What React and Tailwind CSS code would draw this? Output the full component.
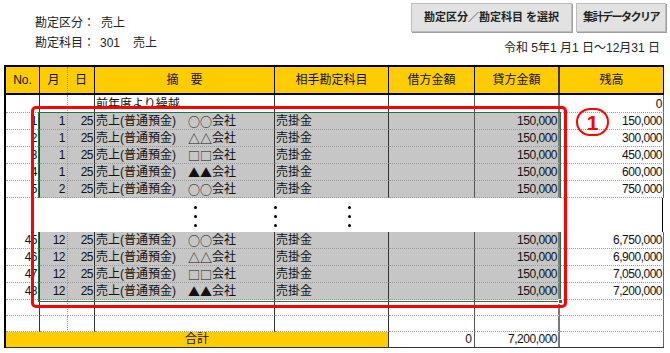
import React from 'react';

const font = "font-['Liberation_Sans','Noto_Sans_CJK_JP',sans-serif]";
const dotB = 'border-b border-b-[#9a9a9a] [border-bottom-style:dotted]';

const cols = [
  { w: 'w-[34px]', br: 'border-r border-r-[#333]', al: 'justify-end pr-[2px]' },
  { w: 'w-[28px]', br: 'border-r border-r-[#999] [border-right-style:dotted]', al: 'justify-end pr-[2px]' },
  { w: 'w-[27px]', br: 'border-r border-r-[#333]', al: 'justify-end pr-[1px]' },
  { w: 'w-[180px]', br: 'border-r border-r-[#333]', al: 'justify-start pl-[1px]' },
  { w: 'w-[114px]', br: 'border-r border-r-[#333]', al: 'justify-start pl-[1px]' },
  { w: 'w-[86px]', br: 'border-r border-r-[#555]', al: 'justify-end pr-[2px]' },
  { w: 'w-[85px]', br: 'border-r-2 border-r-[#7a7a7a]', al: 'justify-end pr-[1px]' },
  { w: 'w-[104px]', br: 'border-r border-r-[#666]', al: 'justify-end pr-[1px]' },
];

const heads = ['No.', '月', '日', '摘　要', '相手勘定科目', '借方金額', '貸方金額', '残高'];

const topRows = [
  ['1', '1', '○○', '150,000'],
  ['2', '1', '△△', '300,000'],
  ['3', '1', '□□', '450,000'],
  ['4', '1', '▲▲', '600,000'],
  ['5', '2', '○○', '750,000'],
];

const bottomRows = [
  ['45', '12', '○○', '6,750,000'],
  ['46', '12', '△△', '6,900,000'],
  ['47', '12', '□□', '7,050,000'],
  ['48', '12', '▲▲', '7,200,000'],
];

const Row = ({ values, h = 'h-[17px]', shaded }) => (
  <div className={`flex ${h}`}>
    {cols.map((c, i) => (
      <div
        key={i}
        className={`${c.w} ${c.br} ${c.al} ${dotB} flex items-end leading-[15px] whitespace-nowrap ${
          shaded && i > 0 && i < 7 ? 'bg-[#c6c6c6]' : 'bg-white'
        } ${i === 3 || i === 4 ? '' : 'tracking-[-0.5px]'}`}
      >
        {values[i]}
      </div>
    ))}
  </div>
);

const desc = (mark) => (
  <span className="flex">
    <span>売上(普通預金)</span>
    <span className="font-['Noto_Sans_CJK_JP',sans-serif] leading-[15px]">　{mark}</span>
    <span>会社</span>
  </span>
);

const dataValues = (r) => [r[0], r[1], '25', desc(r[2]), '売掛金', '', '150,000', r[3]];

const Dots = () => (
  <div className="flex flex-col gap-[6px] pt-[8px]">
    <div className="w-[3px] h-[3px] rounded-full bg-black" />
    <div className="w-[3px] h-[3px] rounded-full bg-black" />
    <div className="w-[3px] h-[3px] rounded-full bg-black" />
  </div>
);

export default function App() {
  return (
    <div className={`relative w-[670px] h-[353px] overflow-hidden bg-white text-[12px] text-[#111] ${font}`}>
      <div className="flex justify-between h-[65px]">
        <div className="pl-[35px] pt-[15px] flex flex-col gap-[4px] leading-[16px] text-[#222]">
          <div className="flex">
            <span>勘定区分：</span>
            <span className="ml-[6px]">売上</span>
          </div>
          <div className="flex">
            <span>勘定科目：</span>
            <span className="ml-[5px]">301</span>
            <span className="ml-[13px]">売上</span>
          </div>
        </div>
        <div className="flex flex-col items-end">
          <div className="flex gap-[4px] pt-[3px] pr-[4px]">
            <button className="w-[161px] h-[29px] bg-[#e2e2e2] border border-[#bdbdbd] shadow-[1px_1px_0_#a0a0a0] text-[11px] font-bold text-[#222]">
              勘定区分／勘定科目 を選択
            </button>
            <button className="w-[90px] h-[29px] bg-[#e2e2e2] border border-[#bdbdbd] shadow-[1px_1px_0_#a0a0a0] text-[11px] font-bold tracking-[-1.5px] text-[#222]">
              集計データクリア
            </button>
          </div>
          <div className="mt-[8px] pr-[10px] leading-[16px] text-[#222]">令和 5年1 月1 日〜12月31 日</div>
        </div>
      </div>

      <div className="ml-[4px] w-[660px] border-l-2 border-black">
        <div className="flex h-[30px] border-t-2 border-b-2 border-black bg-[#ffcc00]">
          {heads.map((t, i) => (
            <div
              key={i}
              className={`${cols[i].w} flex items-center justify-center ${
                i === 1 ? 'border-r border-r-[#888] [border-right-style:dotted]' : i === 6 ? 'border-r-2 border-r-[#333]' : 'border-r border-r-black'
              }`}
            >
              {t}
            </div>
          ))}
        </div>

        <Row h="h-[18px]" values={['', '', '', '前年度より繰越', '', '', '', '0']} />
        {topRows.map((r) => (
          <Row key={r[0]} shaded values={dataValues(r)} />
        ))}

        <div className="h-[34px] w-[657px] bg-white border-r border-r-black flex pl-[188px]">
          <Dots />
          <div className="ml-[77px]">
            <Dots />
          </div>
          <div className="ml-[71px]">
            <Dots />
          </div>
        </div>

        {bottomRows.map((r) => (
          <Row key={r[0]} shaded values={dataValues(r)} />
        ))}
        <Row h="h-[16px]" values={[]} />
        <Row h="h-[16px]" values={[]} />

        <div className="flex h-[16px] border-b border-b-[#333]">
          <div className="w-[383px] bg-[#ffcc00] border-r border-r-[#333] flex items-end justify-center leading-[15px]">合計</div>
          <div className="w-[86px] border-r border-r-[#555] flex items-end justify-end pr-[2px] leading-[15px]">0</div>
          <div className="w-[85px] border-r-2 border-r-[#7a7a7a] flex items-end justify-end pr-[1px] leading-[15px] tracking-[-0.5px]">7,200,000</div>
          <div className="w-[104px] border-r border-r-[#666]" />
        </div>
      </div>

      {/* Excel selection */}
      <div className="absolute left-[38px] top-[112px] w-[523px] h-[86px] border border-b-0 border-[#217346]" />
      <div className="absolute left-[38px] top-[232px] w-[523px] h-[70px] border border-t-0 border-[#217346]" />
      <div className="absolute left-[558px] top-[299px] w-[5px] h-[5px] bg-[#217346] border border-white" />

      {/* annotation */}
      <div className="absolute left-[31px] top-[106px] w-[536px] h-[202px] border-[3px] border-[#ff0000] rounded-[5px]" />
      <div className="absolute left-[576px] top-[108px] w-[33px] h-[28px] rounded-full border-2 border-[#ff0000] flex items-center justify-center text-[21px] font-bold text-[#ff0000] leading-none">
        1
      </div>
    </div>
  );
}
